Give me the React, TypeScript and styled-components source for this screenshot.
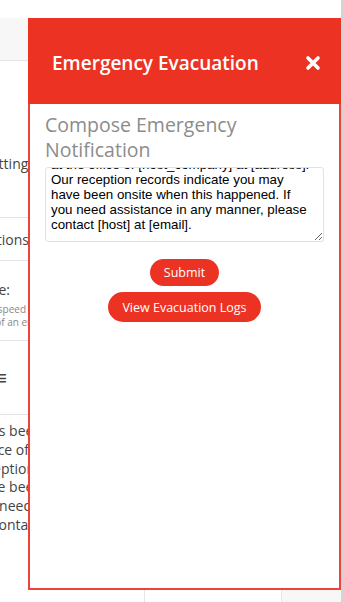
import React, { useEffect, useRef } from "react";
import styled, { createGlobalStyle } from "styled-components";

const GlobalStyle = createGlobalStyle`
  html, body {
    margin: 0;
    padding: 0;
    background: #ffffff;
    font-family: "Open Sans", "Liberation Sans", sans-serif;
  }
`;

const RED = "#ec3323";

const Page = styled.div`
  position: relative;
  width: 343px;
  height: 602px;
  box-sizing: border-box;
  overflow: hidden;
  background: #ffffff;
  border-right: 2px solid #d4d4d4;
  display: flex;
  flex-direction: column;
`;

const TopGap = styled.div`
  height: 18px;
  flex: none;
`;

const Backdrop = styled.div`
  flex: 1;
  display: flex;
`;

const SideColumn = styled.div`
  width: 144px;
  display: flex;
  flex-direction: column;
  border-right: 1px solid #e6e6e6;
  color: #444;
  font-family: "Open Sans", sans-serif;
`;

const TopBand = styled.div`
  height: 42px;
  background: #f7f7f7;
  border-bottom: 1px solid #e4e4e4;
`;

const Block = styled.div<{ $h: number; $end: number; $bottom?: number }>`
  height: ${(p) => p.$h}px;
  box-sizing: border-box;
  border-bottom: 1px solid #e4e4e4;
  display: flex;
  flex-direction: column;
  justify-content: ${(p) => (p.$bottom !== undefined ? "flex-end" : "center")};
  padding-bottom: ${(p) => p.$bottom ?? 0}px;
  align-items: flex-end;
  padding-right: ${(p) => 144 - p.$end}px;
  font-size: 14px;
  line-height: 19px;
  white-space: nowrap;
`;

const Small = styled.span<{ $first?: boolean }>`
  font-size: 10px;
  color: #888;
  line-height: 13px;
  margin-top: ${(p) => (p.$first ? 4 : 0)}px;
`;

const MenuGlyph = styled.span`
  font-size: 20px;
  line-height: 20px;
`;

const BodyText = styled.div`
  padding-top: 7px;
  display: flex;
  flex-direction: column;
  align-items: flex-end;
  padding-right: 108px;
  font-size: 14px;
  line-height: 18.8px;
  white-space: nowrap;
`;

const Rest = styled.div`
  flex: 1;
  display: flex;
  justify-content: flex-end;
`;

const RightStrip = styled.div`
  width: 59px;
  background: #f7f7f7;
  border-left: 1px solid #e6e6e6;
`;

const Modal = styled.div`
  position: absolute;
  left: 28px;
  top: 18px;
  width: 313px;
  height: 572px;
  display: flex;
  flex-direction: column;
`;

const Header = styled.div`
  height: 86px;
  background: ${RED};
  display: flex;
  align-items: center;
  justify-content: space-between;
  padding: 4px 20px 0 24px;
  box-sizing: border-box;
  color: #fff;
`;

const Title = styled.h2`
  margin: 0;
  font-family: "Open Sans", sans-serif;
  font-weight: 600;
  font-size: 19px;
`;

const Close = styled.button`
  border: none;
  background: transparent;
  padding: 0;
  width: 16px;
  height: 16px;
  display: flex;
  cursor: pointer;
`;

const Body = styled.div`
  flex: 1;
  background: #fff;
  border: 2px solid #ee4338;
  border-top: none;
  padding: 8px 15px 0;
  display: flex;
  flex-direction: column;
`;

const Heading = styled.h3`
  margin: 0 0 5px;
  font-family: "Open Sans", sans-serif;
  font-weight: 400;
  font-size: 19.5px;
  line-height: 25px;
  color: #8c8c8c;
`;

const Message = styled.textarea`
  width: 279px;
  height: 75px;
  box-sizing: border-box;
  border: 1px solid #e2e2e2;
  border-radius: 3px;
  padding: 4px 11px 9px 5px;
  font-family: "Liberation Sans", Arial, sans-serif;
  font-size: 13.333px;
  line-height: 15px;
  color: #000;
  resize: vertical;
  overflow: hidden;
  outline: none;
`;

const Actions = styled.div`
  display: flex;
  flex-direction: column;
  align-items: center;
  gap: 6px;
  margin-top: 17px;
`;

const Pill = styled.button<{ $wide?: boolean }>`
  border: none;
  background: ${RED};
  color: #fff;
  font-family: "Open Sans", sans-serif;
  font-size: 12.5px;
  border-radius: 16px;
  height: ${(p) => (p.$wide ? 30 : 27)}px;
  padding: 0 14px;
  cursor: pointer;
`;

const MESSAGE =
  "Hello,\n\nThis is to inform you that an emergency evacuation has been ordered\nat the office of [host_company] at [address]. Our reception records indicate you may have been onsite when this happened. If you need assistance in any manner, please contact [host] at [email].";

export default function App() {
  const ref = useRef<HTMLTextAreaElement>(null);
  useEffect(() => {
    if (ref.current) ref.current.scrollTop = ref.current.scrollHeight;
  }, []);

  return (
    <Page>
      <GlobalStyle />
      <TopGap />
      <Backdrop>
        <SideColumn>
          <TopBand />
          <Block $h={157} $end={35} $bottom={44}>
            Settings
          </Block>
          <Block $h={43} $end={29}>
            Notifications
          </Block>
          <Block $h={80} $end={10} $bottom={11}>
            <span>Message:</span>
            <Small $first style={{ marginRight: -16 }}>
              Increase speed
            </Small>
            <Small style={{ marginRight: -63 }}>in case of an emergency</Small>
          </Block>
          <Block $h={74} $end={7}>
            <MenuGlyph>≡</MenuGlyph>
          </Block>
          <BodyText>
            <span style={{ marginRight: -6 }}>has been</span>
            <span style={{ marginRight: 7 }}>office of</span>
            <span style={{ marginRight: 1 }}>reception</span>
            <span style={{ marginRight: -6 }}>have been</span>
            <span style={{ marginRight: 4 }}>you need</span>
            <span style={{ marginRight: -4 }}>contact</span>
          </BodyText>
        </SideColumn>
        <Rest>
          <RightStrip />
        </Rest>
      </Backdrop>

      <Modal>
        <Header>
          <Title>Emergency Evacuation</Title>
          <Close aria-label="Close">
            <svg width="16" height="16" viewBox="0 0 16 16">
              <path
                d="M3 3 L13 13 M13 3 L3 13"
                stroke="#fff"
                strokeWidth="3.6"
                strokeLinecap="round"
              />
            </svg>
          </Close>
        </Header>
        <Body>
          <Heading>Compose Emergency Notification</Heading>
          <Message ref={ref} defaultValue={MESSAGE} />
          <Actions>
            <Pill>Submit</Pill>
            <Pill $wide>View Evacuation Logs</Pill>
          </Actions>
        </Body>
      </Modal>
    </Page>
  );
}
